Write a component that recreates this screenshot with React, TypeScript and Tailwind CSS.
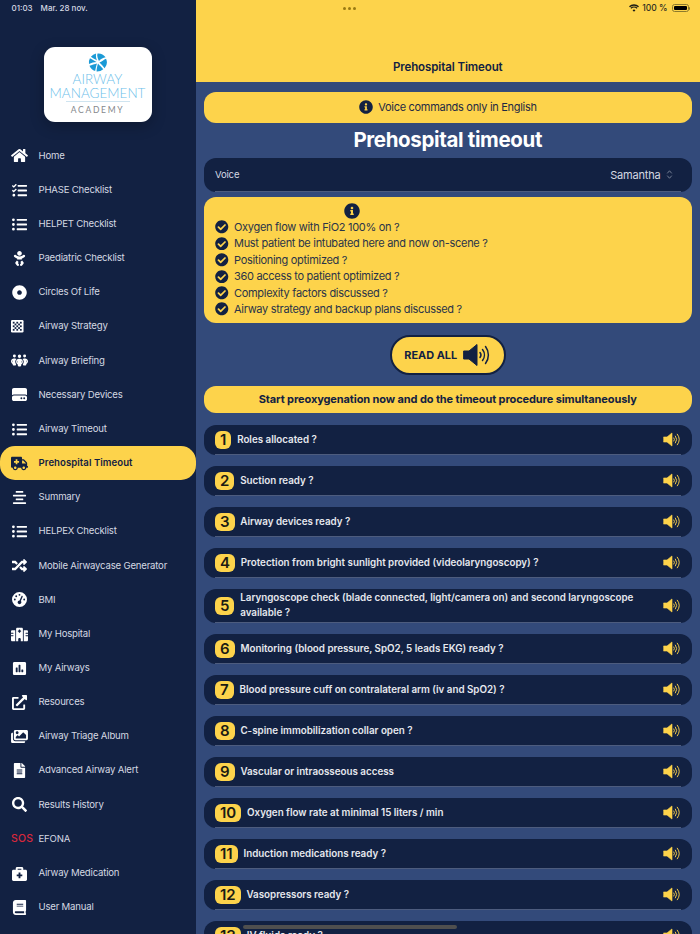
import type { IconType } from "react-icons";
import {
  FaAlignCenter,
  FaAmbulance,
  FaBaby,
  FaBook,
  FaBriefcaseMedical,
  FaCheckCircle,
  FaDotCircle,
  FaExternalLinkAlt,
  FaFileAlt,
  FaHome,
  FaImages,
  FaInfoCircle,
  FaListUl,
  FaPoll,
  FaRandom,
  FaSearch,
  FaTasks,
} from "react-icons/fa";
import { FaGaugeHigh, FaHardDrive, FaHospital, FaPeopleGroup } from "react-icons/fa6";

interface NavItem {
  label: string;
  icon?: IconType;
  active?: boolean;
}

// rounded white square with the dark checker cells of the strategy icon
const StrategyIcon: IconType = () => (
  <svg viewBox="0 0 14 14" className="h-[12.500px] w-[12.500px]">
    <rect width="14" height="14" rx="1.500" fill="#fff" />
    {[2, 4, 6, 8, 10].map((y) =>
      [2, 4, 6, 8, 10].map((x) =>
        (x + y) % 4 === 0 ? <rect key={`${x}-${y}`} x={x} y={y} width="2" height="2" fill="#122142" /> : null,
      ),
    )}
  </svg>
);

const navItems: NavItem[] = [
  { label: "Home", icon: FaHome },
  { label: "PHASE Checklist", icon: FaTasks },
  { label: "HELPET Checklist", icon: FaListUl },
  { label: "Paediatric Checklist", icon: FaBaby },
  { label: "Circles Of Life", icon: FaDotCircle },
  { label: "Airway Strategy", icon: StrategyIcon },
  { label: "Airway Briefing", icon: FaPeopleGroup },
  { label: "Necessary Devices", icon: FaHardDrive },
  { label: "Airway Timeout", icon: FaListUl },
  { label: "Prehospital Timeout", icon: FaAmbulance, active: true },
  { label: "Summary", icon: FaAlignCenter },
  { label: "HELPEX Checklist", icon: FaListUl },
  { label: "Mobile Airwaycase Generator", icon: FaRandom },
  { label: "BMI", icon: FaGaugeHigh },
  { label: "My Hospital", icon: FaHospital },
  { label: "My Airways", icon: FaPoll },
  { label: "Resources", icon: FaExternalLinkAlt },
  { label: "Airway Triage Album", icon: FaImages },
  { label: "Advanced Airway Alert", icon: FaFileAlt },
  { label: "Results History", icon: FaSearch },
  { label: "EFONA" },
  { label: "Airway Medication", icon: FaBriefcaseMedical },
  { label: "User Manual", icon: FaBook },
];

const preChecks = [
  "Oxygen flow with FiO2 100% on ?",
  "Must patient be intubated here and now on-scene ?",
  "Positioning optimized ?",
  "360 access to patient optimized ?",
  "Complexity factors discussed ?",
  "Airway strategy and backup plans discussed ?",
];

const steps = [
  "Roles allocated ?",
  "Suction ready ?",
  "Airway devices ready ?",
  "Protection from bright sunlight provided (videolaryngoscopy) ?",
  "Laryngoscope check (blade connected, light/camera on) and second laryngoscope available ?",
  "Monitoring (blood pressure, SpO2, 5 leads EKG) ready ?",
  "Blood pressure cuff on contralateral arm (iv and SpO2) ?",
  "C-spine immobilization collar open ?",
  "Vascular or intraosseous access",
  "Oxygen flow rate at minimal 15 liters / min",
  "Induction medications ready ?",
  "Vasopressors ready ?",
  "IV fluids ready ?",
];

function Speaker({ className }: { className: string }) {
  return (
    <svg viewBox="0 0 28 24" className={className} fill="none" stroke="currentColor" strokeLinecap="round">
      <path d="M1 8h5l8-6.500v21L6 16H1z" fill="currentColor" strokeWidth="1" strokeLinejoin="round" />
      <path d="M17 9.500a4 4 0 0 1 0 5" strokeWidth="1.500" />
      <path d="M19.500 6.500a9 9 0 0 1 0 11" strokeWidth="1.500" />
      <path d="M22.500 3.500a14 14 0 0 1 0 17" strokeWidth="1.500" />
    </svg>
  );
}

function LogoMark() {
  return (
    <svg viewBox="0 0 40 40" className="h-[19px] w-[20px] text-[#1b9ad6]" fill="currentColor">
      <path d="M19 1a19 19 0 0 1 17 8c-5 1-10 3-14 8-2-5-5-11-3-16z" />
      <path d="M37 12a19 19 0 0 1-3 20c-3-4-7-8-11-12 5-2 9-6 14-8z" />
      <path d="M31 34a19 19 0 0 1-14 5c0-5 1-11 3-17 3 4 8 8 11 12z" />
      <path d="M14 38A19 19 0 0 1 2 27c5-2 11-4 16-5-2 5-3 11-4 16z" />
      <path d="M1 23a19 19 0 0 1 2-12c4 2 9 5 14 8-5 0-11 2-16 4z" />
      <path d="M5 8a19 19 0 0 1 11-7c-1 5 0 11 2 15-4-3-9-5-13-8z" />
    </svg>
  );
}

function Sidebar() {
  return (
    <aside className="flex h-full w-[195.500px] shrink-0 flex-col bg-[#122142]">
      <div className="flex h-[16px] items-center pl-[11.500px] text-[8px] font-medium text-[#d5d9e2]">
        <span>01:03</span>
        <span className="ml-[8px]">Mar. 28 nov.</span>
      </div>
      <div className="flex justify-center pt-[31px] pr-[0.500px]">
        <div className="flex h-[75px] w-[108px] flex-col items-center rounded-[11px] bg-white pt-[6px] shadow-[0_4px_14px_rgba(0,0,0,0.25)] font-['Lato',sans-serif]">
          <LogoMark />
          <span className="mt-[1px] text-center text-[13.500px] leading-[13.500px] font-light whitespace-nowrap text-[#6dc0ea]">
            AIRWAY
            <br />
            MANAGEMENT
          </span>
          <span className="mt-[1px] h-px w-[64px] bg-[#cfe4f0]" />
          <span className="mt-[2.500px] text-[8.500px] leading-[11px] tracking-[0.2em] text-[#85888c]">ACADEMY</span>
        </div>
      </div>
      <nav className="flex flex-col pt-[16.800px]">
        {navItems.map(({ label, icon: Icon, active }) => (
          <div
            key={label}
            className={`flex h-[34.160px] items-center rounded-[15px] pl-[11px] ${
              active ? "bg-[#fdd34b] font-semibold text-[#122142]" : "text-[#d5d9e2]"
            }`}
          >
            <span className="flex w-[27.500px] shrink-0 items-center">
              {Icon ? (
                <Icon className={`h-[15px] w-[17px] ${active ? "text-[#122142]" : "text-white"}`} />
              ) : (
                <span className="text-[10.500px] font-medium tracking-[0.02em] text-[#d8283c]">SOS</span>
              )}
            </span>
            <span className={`text-[9.600px] whitespace-nowrap ${active ? "tracking-[0.05px]" : "tracking-[-0.2px]"}`}>
              {label}
            </span>
          </div>
        ))}
      </nav>
    </aside>
  );
}

function Header() {
  return (
    <header className="flex h-[81.500px] shrink-0 flex-col bg-[#fdd34b] text-[#122142]">
      <div className="flex h-[16px] items-center justify-between pr-[10.500px] pl-[147px]">
        <span className="flex gap-[2px]">
          <span className="h-[3px] w-[3px] rounded-full bg-[#9a7a12]" />
          <span className="h-[3px] w-[3px] rounded-full bg-[#9a7a12]" />
          <span className="h-[3px] w-[3px] rounded-full bg-[#9a7a12]" />
        </span>
        <span className="flex items-center gap-[3px] text-[8.500px] font-medium text-[#2a2a20]">
          <svg viewBox="0 0 16 12" className="h-[8px] w-[10px]" fill="#1b1b14">
            <path d="M8 12 5.700 9.400a3.400 3.400 0 0 1 4.600 0zM3.700 7.300 2.300 5.700a8.400 8.400 0 0 1 11.400 0l-1.400 1.600a6.300 6.300 0 0 0-8.600 0zM1.400 4.700 0 3.100a12 12 0 0 1 16 0l-1.400 1.600a10 10 0 0 0-13.200 0z" />
          </svg>
          <span>100 %</span>
          <span className="ml-[1px] flex items-center">
            <span className="flex h-[8px] w-[17px] rounded-[2.500px] border border-[#8d7a2c] p-[1px]">
              <span className="h-full w-full rounded-[1px] bg-black" />
            </span>
            <span className="h-[3px] w-[1px] rounded-r-sm bg-[#8d7a2c]" />
          </span>
        </span>
      </div>
      <div className="flex flex-1 items-end justify-center pb-[7px] text-[11.500px] leading-[16px] font-semibold tracking-[-0.1px]">
        Prehospital Timeout
      </div>
    </header>
  );
}

function StepRow({ index, text }: { index: number; text: string }) {
  const number = index + 1;
  const isTall = number === 5;
  return (
    <div className={`shrink-0 rounded-[12px] bg-[#122142] px-[11px] ${isTall ? "h-[34.500px]" : "h-[30.500px]"}`}>
      <div className="flex h-full items-center border-t border-b border-t-transparent border-b-[#4d5c7e]">
        <span className="flex h-[18px] shrink-0 items-center justify-center rounded-[6px] bg-[#fdd34b] px-[5px] text-[15px] font-semibold text-[#1b1b14]">
          {number}
        </span>
        <span className="ml-[5.800px] flex-1 pr-[12px] text-[9.800px] leading-[14.500px] font-semibold text-[#e6e8ee]">
          {text}
        </span>
        <Speaker className="h-[15px] w-[18px] shrink-0 text-[#fdd34b]" />
      </div>
    </div>
  );
}

function MainContent() {
  return (
    <main className="flex min-h-0 flex-1 flex-col overflow-hidden px-[8.500px] pt-[10.500px]">
      <div className="flex h-[30.500px] shrink-0 items-center justify-center gap-[5.500px] rounded-[12px] bg-[#fdd34b] text-[11px] tracking-[-0.3px] text-[#1f2a44]">
        <FaInfoCircle className="h-[14px] w-[14px] text-[#122142]" />
        Voice commands only in English
      </div>
      <h1 className="mt-[2px] shrink-0 text-center text-[20.500px] leading-[30px] font-bold tracking-[-0.35px] text-white">
        Prehospital timeout
      </h1>
      <div className="mt-[3.500px] h-[33.500px] shrink-0 rounded-[12px] bg-[#122142] px-[11px]">
        <div className="flex h-full items-center justify-between border-t border-b border-t-transparent border-b-[#4d5c7e] pr-[8px]">
          <span className="text-[9.600px] tracking-[-0.2px] text-[#d5d9e2]">Voice</span>
          <span className="flex items-center gap-[5px] text-[11px] tracking-[-0.2px] text-[#d5d9e2]">
            Samantha
            <svg viewBox="0 0 8 12" className="h-[9px] w-[7px]" fill="none" stroke="#7d869b" strokeWidth="1.200">
              <path d="M1 4.500 4 1l3 3.500M1 7.500 4 11l3-3.500" />
            </svg>
          </span>
        </div>
      </div>
      <section className="mt-[5.500px] shrink-0 rounded-[12px] bg-[#fdd34b] px-[11px] pt-[6px] pb-[5.500px] text-[11px] tracking-[-0.3px] text-[#2a3349]">
        <div className="flex justify-center pr-[191px]">
          <FaInfoCircle className="h-[16px] w-[16px] text-[#122142]" />
        </div>
        <ul className="flex flex-col">
          {preChecks.map((check) => (
            <li key={check} className="flex h-[16.400px] items-center gap-[5.500px]">
              <FaCheckCircle className="h-[13.500px] w-[13.500px] shrink-0 text-[#122142]" />
              {check}
            </li>
          ))}
        </ul>
      </section>
      <div className="flex shrink-0 justify-center pt-[12px]">
        <button className="flex h-[40px] w-[116px] items-center justify-center gap-[6px] rounded-[20px] border-2 border-[#122142] bg-[#fdd34b] text-[10.900px] font-bold text-[#122142]">
          READ ALL
          <Speaker className="h-[24px] w-[28px]" />
        </button>
      </div>
      <div className="mt-[11px] flex h-[27px] shrink-0 items-center justify-center rounded-[12px] bg-[#fdd34b] text-[11px] font-bold tracking-[-0.1px] text-[#122142]">
        Start preoxygenation now and do the timeout procedure simultaneously
      </div>
      <div className="mt-[11.800px] flex flex-col gap-[10.500px]">
        {steps.map((step, index) => (
          <StepRow key={step} index={index} text={step} />
        ))}
      </div>
    </main>
  );
}

export default function App() {
  return (
    <div className="relative flex h-[934px] w-[700px] overflow-hidden bg-[#334a7a] font-['Inter',sans-serif]">
      <Sidebar />
      <div className="flex min-w-0 flex-1 flex-col">
        <Header />
        <MainContent />
      </div>
      <div className="absolute top-[925px] left-[243px] h-[3.500px] w-[214px] rounded-full bg-[#4f4f4f]" />
    </div>
  );
}
